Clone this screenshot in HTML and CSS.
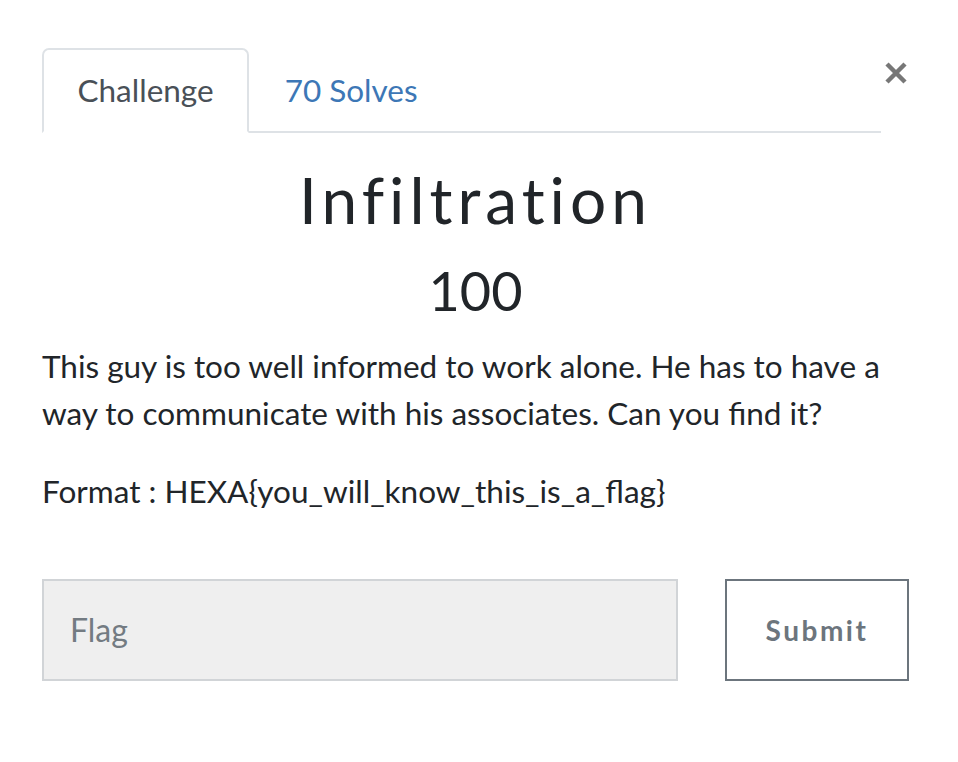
FILE: index.html
```html
<!DOCTYPE html>
<html>
<head>
<meta charset="utf-8">
<link rel="stylesheet" href="styles.css">
</head>
<body>
<div class="modal">
  <div class="top">
    <ul class="tabs">
      <li class="tab active">Challenge</li>
      <li class="tab link">70 Solves</li>
    </ul>
    <button class="close" aria-label="Close">
      <svg width="24" height="24" viewBox="0 0 24 24"><path d="M3 3 L21 21 M21 3 L3 21" stroke="#777" stroke-width="4.5" fill="none"/></svg>
    </button>
  </div>
  <h3 class="name">Infiltration</h3>
  <h4 class="value">100</h4>
  <div class="desc">
    <p>This guy is too well informed to work alone. He has to have a way to communicate with his associates. Can you find it?</p>
    <p>Format : HEXA{you_will_know_this_is_a_flag}</p>
  </div>
  <form class="form">
    <input class="flag" type="text" placeholder="Flag">
    <button class="submit" type="button">Submit</button>
  </form>
</div>
</body>
</html>
```
FILE: styles.css
```css
html, body {
  margin: 0;
  padding: 0;
  background: #fff;
}
body {
  font-family: Lato, "Open Sans", sans-serif;
  color: #212529;
}
.modal {
  width: 867px;
  padding: 48px 0 0 42px;
}
.top {
  display: flex;
  align-items: flex-start;
}
.tabs {
  list-style: none;
  margin: 0;
  padding: 0;
  display: flex;
  width: 839px;
  border-bottom: 2px solid #dee2e6;
}
.tab {
  font-size: 31.5px;
  height: 81px;
  line-height: 80px;
  padding: 0 33.5px;
  margin-bottom: -2px;
  border: 2px solid transparent;
  border-radius: 7px 7px 0 0;
}
.tab.active {
  color: #495057;
  border-color: #dee2e6 #dee2e6 #fff;
  background: #fff;
}
.tab.link {
  color: #3d77b6;
}
.close {
  border: 0;
  background: none;
  padding: 0;
  margin: 13px 0 0 3px;
  width: 24px;
  height: 24px;
  line-height: 0;
}
.name {
  margin: 29px 0 0;
  text-align: center;
  font-weight: 400;
  font-size: 64px;
  line-height: 1.2;
  letter-spacing: 5px;
}
.value {
  margin: 20px 0 0;
  text-align: center;
  font-weight: 400;
  font-size: 54px;
  line-height: 1.2;
}
.desc {
  margin-top: 19px;
  font-size: 31.5px;
  line-height: 47px;
}
.desc p {
  margin: 0 0 31px;
}
.form {
  display: flex;
  justify-content: space-between;
  margin-top: 64px;
}
.flag {
  box-sizing: border-box;
  width: 636px;
  height: 102px;
  background: #efefef;
  border: 2px solid #d1d4d7;
  padding: 0 26px;
  font-family: Lato, sans-serif;
  font-size: 32px;
  color: #495057;
}
.flag::placeholder {
  color: #737b82;
}
.submit {
  box-sizing: border-box;
  width: 184px;
  height: 102px;
  background: #fff;
  border: 2px solid #6c757d;
  font-family: Lato, sans-serif;
  font-weight: 700;
  font-size: 28px;
  letter-spacing: 2.5px;
  color: #6c757d;
}
```
